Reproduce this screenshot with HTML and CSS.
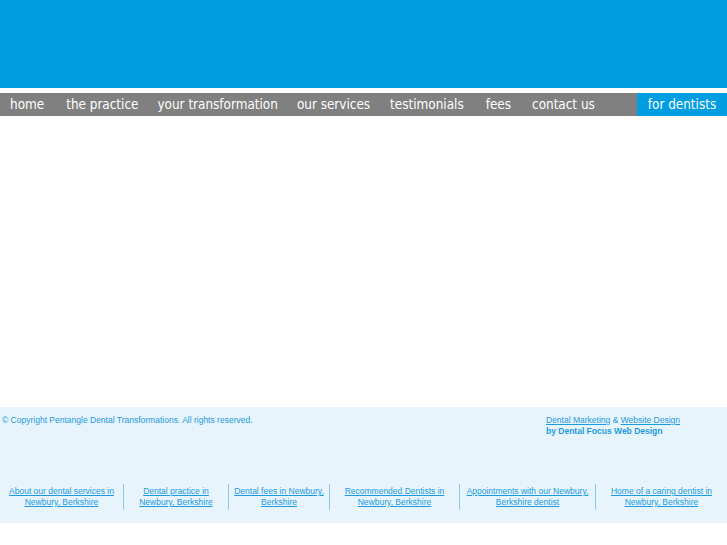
FILE: index.html
```html
<!DOCTYPE html>
<html>
<head>
<meta charset="utf-8">
<link rel="stylesheet" href="styles.css">
</head>
<body>
<div class="header"></div>
<div class="nav">
  <ul class="menu">
    <li class="home">home</li>
    <li class="practice">the practice</li>
    <li class="transform">your transformation</li>
    <li class="services">our services</li>
    <li class="testimonials">testimonials</li>
    <li class="fees">fees</li>
    <li class="contact">contact us</li>
  </ul>
  <div class="dentists">for dentists</div>
</div>
<div class="content"></div>
<div class="footer">
  <div class="footer-top">
    <div class="copyright">© Copyright Pentangle Dental Transformations. All rights reserved.</div>
    <div class="credit">
      <div><a href="#">Dental Marketing</a> &amp; <a href="#">Website Design</a></div>
      <div class="by">by Dental Focus Web Design</div>
    </div>
  </div>
  <div class="footer-links">
    <a class="c1" href="#">About our dental services in Newbury, Berkshire</a>
    <a class="c2" href="#">Dental practice in Newbury, Berkshire</a>
    <a class="c3" href="#">Dental fees in Newbury, Berkshire</a>
    <a class="c4" href="#">Recommended Dentists in Newbury, Berkshire</a>
    <a class="c5" href="#">Appointments with our Newbury, Berkshire dentist</a>
    <a class="c6" href="#">Home of a caring dentist in Newbury, Berkshire</a>
  </div>
</div>
</body>
</html>
```
FILE: styles.css
```css
html, body { margin: 0; padding: 0; background: #fff; }
body { font-family: "Liberation Sans", Arial, sans-serif; }
.header { height: 88px; background: #009de0; }
.nav {
  margin-top: 5px;
  height: 23px;
  background: #808080;
  display: flex;
  justify-content: space-between;
}
.menu {
  list-style: none;
  margin: 0;
  padding: 0 0 0 10px;
  display: flex;
  font-family: "DejaVu Sans Condensed", "DejaVu Sans", sans-serif;
  font-size: 13.4px;
  color: #fff;
  line-height: 24px;
}
.menu .practice { margin-left: 22px; }
.menu .transform { margin-left: 19px; }
.menu .services { margin-left: 19px; }
.menu .testimonials { margin-left: 20px; }
.menu .fees { margin-left: 22px; }
.menu .contact { margin-left: 21px; }
.dentists {
  width: 90px;
  background: #009de0;
  color: #fff;
  font-family: "DejaVu Sans Condensed", "DejaVu Sans", sans-serif;
  font-size: 13.4px;
  line-height: 24px;
  text-align: center;
}
.content { height: 291px; }
.footer {
  height: 116px;
  background: #e8f4fb;
  color: #1a9be0;
  font-size: 8.5px;
}
.footer a { color: #1a9be0; }
.footer-top {
  display: flex;
  justify-content: space-between;
  padding: 8px 0 0 2px;
  height: 56px;
}
.credit { width: 181px; line-height: 11px; }
.copyright { line-height: 11px; }
.by { font-weight: bold; }
.footer-links {
  display: flex;
  align-items: stretch;
  margin-top: 13px;
}
.footer-links a {
  text-align: center;
  line-height: 11px;
  padding: 2px 2px;
  box-sizing: border-box;
  border-left: 1px solid #86c8ec;
}
.footer-links a.c1 { border-left: none; width: 123px; }
.footer-links .c2 { width: 105px; }
.footer-links .c3 { width: 101px; }
.footer-links .c4 { width: 130px; }
.footer-links .c5 { width: 136px; }
.footer-links .c6 { width: 132px; }
```
